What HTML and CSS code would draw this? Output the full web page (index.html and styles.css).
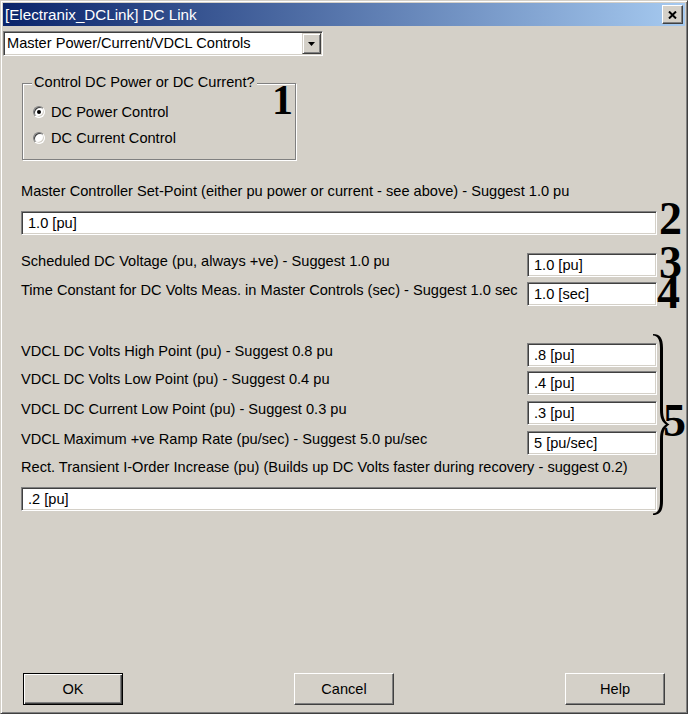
FILE: index.html
```html
<!DOCTYPE html>
<html>
<head>
<meta charset="utf-8">
<title>DC Link</title>
<link rel="stylesheet" href="styles.css">
</head>
<body>
<div class="window">
  <div class="titlebar">
    <span class="title">[Electranix_DCLink] DC Link</span>
    <div class="close-btn">
      <svg width="9" height="8" viewBox="0 0 9 8"><path d="M1 0.5 L8 7.5 M8 0.5 L1 7.5" stroke="#000" stroke-width="2" fill="none"/></svg>
    </div>
  </div>

  <div class="combo">
    <span class="combo-text">Master Power/Current/VDCL Controls</span>
    <div class="combo-btn">
      <svg width="7" height="4" viewBox="0 0 7 4"><polygon points="0,0 7,0 3.5,4" fill="#000"/></svg>
    </div>
  </div>

  <div class="form">
    <div class="group">
      <span class="group-title">Control DC Power or DC Current?</span>
      <div class="radio-row first"><span class="radio checked"></span><span>DC Power Control</span></div>
      <div class="radio-row second"><span class="radio"></span><span>DC Current Control</span></div>
      <span class="num num1">1</span>
    </div>

    <div class="label master-label">Master Controller Set-Point (either pu power or current - see above) - Suggest 1.0 pu</div>
    <div class="row master-row">
      <div class="input wide">1.0 [pu]</div>
      <span class="num num2">2</span>
    </div>

    <div class="row row3">
      <span class="label">Scheduled DC Voltage (pu, always +ve) - Suggest 1.0 pu</span>
      <div class="input small">1.0 [pu]</div>
      <span class="num num3">3</span>
    </div>
    <div class="row row4">
      <span class="label">Time Constant for DC Volts Meas. in Master Controls (sec) - Suggest 1.0 sec</span>
      <div class="input small">1.0 [sec]</div>
      <span class="num num4">4</span>
    </div>

    <div class="vdcl">
      <div class="row">
        <span class="label">VDCL DC Volts High Point (pu) - Suggest 0.8 pu</span>
        <div class="input small">.8 [pu]</div>
      </div>
      <div class="row gap4">
        <span class="label">VDCL DC Volts Low Point (pu) - Suggest 0.4 pu</span>
        <div class="input small">.4 [pu]</div>
      </div>
      <div class="row gap6">
        <span class="label">VDCL DC Current Low Point (pu) - Suggest 0.3 pu</span>
        <div class="input small">.3 [pu]</div>
      </div>
      <div class="row gap6">
        <span class="label">VDCL Maximum +ve Ramp Rate (pu/sec) - Suggest 5.0 pu/sec</span>
        <div class="input small">5 [pu/sec]</div>
      </div>
      <div class="label rect-label">Rect. Transient I-Order Increase (pu) (Builds up DC Volts faster during recovery - suggest 0.2)</div>
      <div class="input wide rect-input">.2 [pu]</div>

      <svg class="brace" width="18" height="181" viewBox="0 0 18 181">
        <path d="M1 0 C8 0 11 4 11 14 L11 76 C11 84 13 88 17.5 90.5 C13 93 11 97 11 105 L11 167 C11 177 8 181 1 181 L1 179.5 C6 179 8 175 8 167 L8 105 C8 97 10 93 14 90.5 C10 88 8 84 8 76 L8 14 C8 6 6 2 1 1.5 Z" fill="#000"/>
      </svg>
      <span class="num num5">5</span>
    </div>
  </div>

  <div class="buttons">
    <div class="btn default">OK</div>
    <div class="btn">Cancel</div>
    <div class="btn">Help</div>
  </div>
</div>
</body>
</html>
```

FILE: styles.css
```css
* {
  box-sizing: border-box;
}

html, body {
  margin: 0;
  padding: 0;
  overflow: hidden;
}

body {
  background: #D4D0C8;
  font-family: "Liberation Sans", Arial, sans-serif;
  font-size: 14.6px;
  color: #000;
}

.window {
  width: 688px;
  height: 714px;
  background: #D4D0C8;
  border: 1px solid;
  border-color: #D4D0C8 #404040 #404040 #D4D0C8;
  box-shadow: inset 1px 1px #fff, inset -1px -1px #808080;
  padding: 2px;
  display: flex;
  flex-direction: column;
}

.titlebar {
  height: 23px;
  background: linear-gradient(to right, #0A246A, #A6CAF0);
  display: flex;
  align-items: center;
  justify-content: space-between;
  padding: 0 2px 0 2px;
  color: #fff;
  flex-shrink: 0;
}

.title {
  font-size: 15.2px;
  line-height: 16px;
  white-space: nowrap;
}

.close-btn {
  width: 21px;
  height: 19px;
  background: #D4D0C8;
  border: 1px solid;
  border-color: #fff #404040 #404040 #fff;
  box-shadow: inset -1px -1px #808080;
  display: flex;
  align-items: center;
  justify-content: center;
}

.close-btn svg {
  display: block;
}

.combo {
  margin-top: 5px;
  width: 320px;
  height: 25px;
  background: #fff;
  border: 1px solid;
  border-color: #808080 #fff #fff #808080;
  box-shadow: inset 1px 1px #404040, inset -1px -1px #D4D0C8;
  padding: 1px;
  display: flex;
  align-items: center;
  flex-shrink: 0;
}

.combo-text {
  padding-left: 2px;
  line-height: 21px;
  white-space: nowrap;
}

.combo-btn {
  margin-left: auto;
  width: 19px;
  height: 21px;
  background: #D4D0C8;
  border: 1px solid;
  border-color: #D4D0C8 #404040 #404040 #D4D0C8;
  box-shadow: inset 1px 1px #fff, inset -1px -1px #808080;
  display: flex;
  align-items: center;
  justify-content: center;
}

.combo-btn svg {
  display: block;
}

.form {
  padding-left: 18px;
  display: flex;
  flex-direction: column;
}

.group {
  position: relative;
  margin-top: 27px;
  margin-left: 1px;
  width: 274px;
  height: 77px;
  border: 1px solid #808080;
  box-shadow: 1px 1px #fff, inset 1px 1px #fff;
}

.group-title {
  display: block;
  width: max-content;
  margin: -10px 0 0 9px;
  padding: 0 2px;
  background: #D4D0C8;
  line-height: 16px;
}

.radio-row {
  display: flex;
  align-items: center;
  height: 16px;
  padding-left: 10px;
  line-height: 16px;
}

.radio-row.first {
  margin-top: 14px;
}

.radio-row.second {
  margin-top: 10px;
}

.radio {
  position: relative;
  width: 12px;
  height: 12px;
  border-radius: 50%;
  background: #fff;
  border: 1px solid;
  border-color: #808080 #fff #fff #808080;
  box-shadow: inset 1px 1px #404040, inset -1px -1px #D4D0C8;
  margin-right: 6px;
  flex-shrink: 0;
}

.radio.checked::after {
  content: "";
  position: absolute;
  left: 3px;
  top: 3px;
  width: 4px;
  height: 4px;
  border-radius: 50%;
  background: #000;
}

.label {
  line-height: 16px;
  white-space: nowrap;
}

.master-label {
  margin-top: 23px;
}

.row {
  position: relative;
  width: 636px;
  display: flex;
  justify-content: space-between;
  align-items: flex-start;
}

.master-row {
  margin-top: 12px;
}

.row3 {
  margin-top: 18px;
}

.row4 {
  margin-top: 5px;
}

.input {
  height: 24px;
  background: #fff;
  border: 1px solid;
  border-color: #808080 #fff #fff #808080;
  box-shadow: inset 1px 1px #404040, inset -1px -1px #D4D0C8;
  padding-left: 6px;
  line-height: 22px;
  white-space: nowrap;
}

.input.small {
  width: 130px;
}

.input.wide {
  width: 636px;
}

.vdcl {
  position: relative;
  margin-top: 37px;
  display: flex;
  flex-direction: column;
}

.gap4 {
  margin-top: 4px;
}

.gap6 {
  margin-top: 6px;
}

.rect-label {
  margin-top: 4px;
}

.rect-input {
  margin-top: 12px;
}

.num {
  position: absolute;
  font-family: "Liberation Serif", "Times New Roman", serif;
  font-weight: bold;
  font-size: 46px;
  line-height: 30px;
  color: #000;
}

.num1 {
  font-size: 42px;
  line-height: 28px;
  left: 249px;
  top: 2px;
}

.num2 {
  left: 638px;
  top: -7px;
}

.num3 {
  left: 638px;
  top: -5px;
}

.num4 {
  left: 636px;
  top: -4px;
}

.brace {
  position: absolute;
  left: 631px;
  top: -9px;
  display: block;
}

.num5 {
  left: 642px;
  top: 63px;
}

.buttons {
  margin-top: auto;
  margin-bottom: 6px;
  padding: 0 20px;
  display: flex;
  justify-content: space-between;
  flex-shrink: 0;
}

.btn {
  width: 100px;
  height: 32px;
  background: #D4D0C8;
  border: 1px solid;
  border-color: #fff #404040 #404040 #fff;
  box-shadow: inset -1px -1px #808080;
  display: flex;
  align-items: center;
  justify-content: center;
  line-height: 16px;
}

.btn.default {
  border-color: #000;
  box-shadow: inset 1px 1px #fff, inset -1px -1px #404040, inset -2px -2px #808080;
}
```
